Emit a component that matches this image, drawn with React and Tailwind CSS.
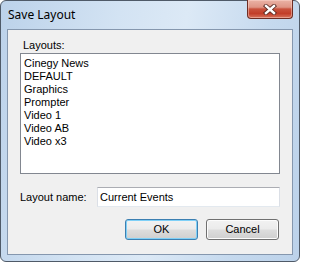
import React from "react";

const items = ["Cinegy News", "DEFAULT", "Graphics", "Prompter", "Video 1", "Video AB", "Video x3"];

function CloseGlyph() {
  return (
    <svg width="14" height="11" viewBox="0 0 14 11">
      <path d="M3 2 L11 9 M11 2 L3 9" stroke="#5a2a22" strokeWidth="4.2" strokeLinecap="square" fill="none" />
      <path d="M3 2 L11 9 M11 2 L3 9" stroke="#ffffff" strokeWidth="2.4" strokeLinecap="square" fill="none" />
    </svg>
  );
}

export default function App() {
  return (
    <div
      className="w-[300px] h-[262px] rounded-[6px] border border-[#4f5a68] flex flex-col bg-[linear-gradient(100deg,#bcd2ea_0%,#d3e3f3_35%,#dce9f6_55%,#c5d9ee_80%,#bcd2ea_100%)]"
      style={{ fontFamily: '"Liberation Sans", Arial, sans-serif' }}
    >
      <div className="h-[28px] flex items-start justify-between pl-[7px] pr-[6px]">
        <div className="pt-[7px] text-[12px] leading-[14px] text-black" style={{ fontFamily: '"Noto Sans", "Liberation Sans", sans-serif' }}>
          Save Layout
        </div>
        <div className="-mt-px w-[46px] h-[19px] rounded-b-[4px] border border-t-0 border-[#6e2d24] flex items-center justify-center bg-[linear-gradient(180deg,#eab3a6_0%,#df9585_40%,#c9523d_50%,#c23e29_75%,#d7735c_100%)] shadow-[inset_0_0_0_1px_rgba(255,220,210,0.45)]">
          <CloseGlyph />
        </div>
      </div>
      <div className="mx-[6px] h-[226px] border border-[#8597ae] bg-[#f0f0f0] flex flex-col pt-[9px] pl-[12px] pr-[12px] text-[11px] leading-[13px] text-black">
        <div className="pl-[3px] h-[13px]">Layouts:</div>
        <div className="mt-[1px] h-[121px] border border-[#828790] bg-white pt-[3px] pl-[3px]">
          {items.map((it) => (
            <div key={it} className="h-[13px] leading-[13px]">{it}</div>
          ))}
        </div>
        <div className="mt-[13px] flex items-center">
          <div className="w-[77px]">Layout name:</div>
          <div className="flex-1 h-[20px] border border-[#abadb3] border-l-[#dbdfe6] border-r-[#dbdfe6] border-b-[#e3e9ef] bg-white flex items-center pl-[2px]">
            Current Events
          </div>
        </div>
        <div className="mt-[12px] flex justify-end gap-[8px] pr-[1px]">
          <div className="w-[73px] h-[21px] rounded-[3px] border border-[#3c7fb1] shadow-[inset_0_0_0_1px_#7fd0f7] flex items-center justify-center bg-[linear-gradient(180deg,#f2f2f2_0%,#ebebeb_48%,#dddddd_52%,#cfcfcf_100%)]">
            OK
          </div>
          <div className="w-[73px] h-[21px] rounded-[3px] border border-[#707070] shadow-[inset_0_0_0_1px_#fcfcfc] flex items-center justify-center bg-[linear-gradient(180deg,#f2f2f2_0%,#ebebeb_48%,#dddddd_52%,#cfcfcf_100%)]">
            Cancel
          </div>
        </div>
      </div>
    </div>
  );
}
